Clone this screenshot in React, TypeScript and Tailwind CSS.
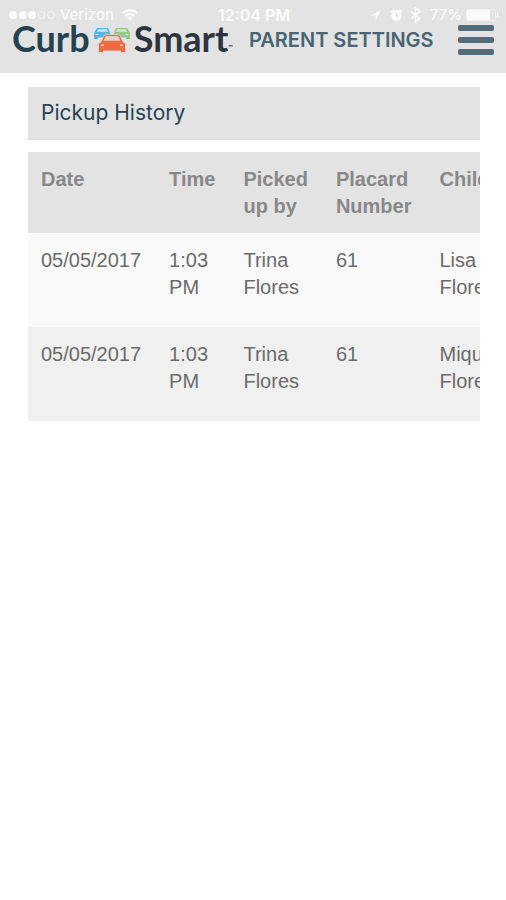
const pickups = [
  { id: 1, date: "05/05/2017", time: "1:03 PM", by: "Trina Flores", placard: 61, child: "Lisa Flores" },
  { id: 2, date: "05/05/2017", time: "1:03 PM", by: "Trina Flores", placard: 61, child: "Miquel Flores" },
];

const columns = ["Date", "Time", "Picked up by", "Placard Number", "Child"];

function SignalDots() {
  return (
    <svg className="h-3 w-12" viewBox="0 0 48 12" fill="currentColor" aria-hidden="true">
      <circle cx="5" cy="6" r="4" />
      <circle cx="15" cy="6" r="4" />
      <circle cx="24" cy="6" r="4" />
      <circle cx="33.5" cy="6" r="3.5" fill="none" stroke="currentColor" opacity="0.7" />
      <circle cx="43" cy="6" r="3.5" fill="none" stroke="currentColor" opacity="0.7" />
    </svg>
  );
}

function Wifi() {
  return (
    <svg className="h-3 w-4" viewBox="0 0 16 12" fill="none" stroke="currentColor" strokeWidth="2.2" aria-hidden="true">
      <path d="M0.8 4.2a10.2 10.2 0 0 1 14.4 0" />
      <path d="M3.4 7a6.5 6.5 0 0 1 9.2 0" />
      <path d="M8 12 5.3 9.2a3.8 3.8 0 0 1 5.4 0z" fill="currentColor" stroke="none" />
    </svg>
  );
}

function StatusIcons() {
  return (
    <svg className="h-4 w-[52px]" viewBox="0 0 52 16" fill="none" stroke="currentColor" aria-hidden="true">
      <path d="M11 3 1 8.4h4.8V13.5z" fill="currentColor" stroke="none" />
      <circle cx="26.5" cy="8.5" r="5.2" fill="currentColor" stroke="none" />
      <path d="M21 5.2l2.5-2.4M32 5.2l-2.5-2.4" strokeWidth="1.5" />
      <path d="M26.5 5.8v3h2.2" stroke="#dcdcdc" strokeWidth="1.2" />
      <path d="M41 4.6l9 7-4.5 3.6V.8L50 4.4l-9 7" strokeWidth="1.5" />
    </svg>
  );
}

function Battery() {
  return (
    <svg className="h-3 w-[34px]" viewBox="0 0 34 12" aria-hidden="true">
      <rect x="0.5" y="0.5" width="29" height="11" rx="2" fill="none" stroke="currentColor" opacity="0.6" />
      <rect x="1" y="1" width="23" height="10" rx="1" fill="currentColor" />
      <path d="M31 3.5a3 3 0 0 1 0 5z" fill="currentColor" />
    </svg>
  );
}

function Cars() {
  return (
    <svg className="h-[26px] w-9" viewBox="0 0 36 26" aria-hidden="true">
      <path d="M3 1h11l2 4.5 1 3-5 2H4v1.5H0V6z" fill="#4db8e4" />
      <path d="M4.2 2.2h8.6l1.3 2.6H3z" fill="#cfe6f0" />
      <path d="M1.5 7h3v1h-3z" fill="#d3e8f0" />
      <path d="M22 1h11l3 5v6h-4v-1.5h-7l-6-2 1-3z" fill="#93cc80" />
      <path d="M23.2 2.2h8.6L33 4.8H22z" fill="#d9eacb" />
      <path d="M31.5 7h3v1h-3z" fill="#dceacf" />
      <path d="M10.5 7.5h15l3.5 7 2.5 2v9h-5V24h-17v1.5h-5v-9l2.5-2z" fill="#f26b45" stroke="#e3e3e3" strokeWidth="0.7" />
      <path d="M11.8 9h12.4l2.3 4.8h-17z" fill="#eccfc6" />
      <path d="M7 17.5h3V19H7zM26 17.5h3V19h-3z" fill="#f9cdbd" />
    </svg>
  );
}

function Header() {
  return (
    <header className="bg-[#e3e3e3] pb-[18px]">
      <div className="grid h-[25px] grid-cols-3 items-center pt-1 pr-1.5 pl-2 font-['Inter',sans-serif] text-[15px] leading-5 whitespace-nowrap text-white/85">
        <div className="flex items-center gap-1">
          <SignalDots />
          <span>Verizon</span>
          <span className="pl-1">
            <Wifi />
          </span>
        </div>
        <span className="text-center text-[16px] font-semibold">12:04 PM</span>
        <div className="flex items-center justify-end gap-1">
          <StatusIcons />
          <span className="pl-1">77%</span>
          <Battery />
        </div>
      </div>
      <div className="flex h-[30px] items-center gap-4 px-3">
        <a href="#home" className="flex items-center gap-1 font-['Lato',sans-serif] text-[36px] leading-[26px] font-bold text-[#24424f]">
          <span className="pb-1">Curb</span>
          <Cars />
          <span className="flex items-end pb-1 text-[#2d3640]">
            Smart<span className="text-[6px] leading-2">™</span>
          </span>
        </a>
        <h1 className="font-['Inter',sans-serif] text-[20px] font-semibold whitespace-nowrap text-[#496472]">PARENT SETTINGS</h1>
        <button type="button" aria-label="Menu" className="ml-auto flex w-9 flex-col gap-[6px]">
          <span className="h-[6px] rounded-xs bg-[#526b7b]" />
          <span className="h-[6px] rounded-xs bg-[#526b7b]" />
          <span className="h-[6px] rounded-xs bg-[#526b7b]" />
        </button>
      </div>
    </header>
  );
}

export default function App() {
  return (
    <div className="min-h-screen bg-white">
      <Header />
      <main className="flex flex-col gap-3 pt-[14px] pr-[26px] pl-7">
        <h2 className="border-b border-[#dadada] bg-[#e3e3e3] px-[13px] py-3 font-['Inter',sans-serif] text-[21px] leading-7 text-[#264453]">
          Pickup History
        </h2>
        <div className="overflow-hidden font-['Liberation_Sans',Arial,sans-serif] text-[20px] leading-[27px]">
          <table className="w-0 text-left">
            <thead className="bg-[#e3e3e3] text-[#888888]">
              <tr>
                {columns.map((c) => (
                  <th key={c} scope="col" className="pt-[14px] pr-[15px] pb-[13px] pl-[13px] align-top font-bold">
                    {c}
                  </th>
                ))}
              </tr>
            </thead>
            <tbody className="text-[#6b6b6b]">
              {pickups.map((p) => (
                <tr key={p.id} className="odd:bg-[#f9f9f9] even:bg-[#f0f0f0]">
                  {[p.date, p.time, p.by, p.placard, p.child].map((value, i) => (
                    <td key={i} className="pt-[14px] pr-[15px] pb-[26px] pl-[13px] align-top">
                      {value}
                    </td>
                  ))}
                </tr>
              ))}
            </tbody>
          </table>
        </div>
      </main>
    </div>
  );
}
